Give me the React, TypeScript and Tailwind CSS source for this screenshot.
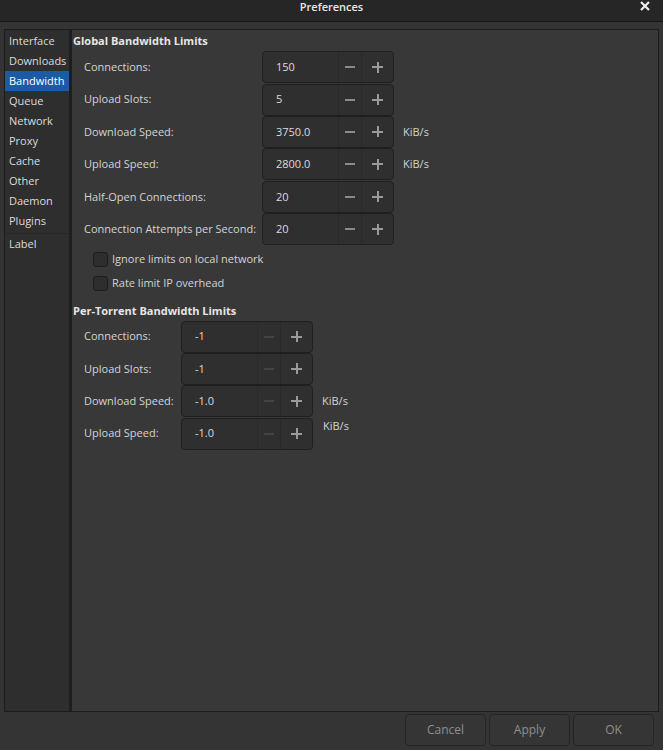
import React from 'react';

const font = { fontFamily: '"Open Sans", "Noto Sans", sans-serif' };

const sections = ['Interface', 'Downloads', 'Bandwidth', 'Queue', 'Network', 'Proxy', 'Cache', 'Other', 'Daemon', 'Plugins'];

type Row = { label: string; value: string; unit?: string; minusOff?: boolean };

const globalRows: Row[] = [
  { label: 'Connections:', value: '150' },
  { label: 'Upload Slots:', value: '5' },
  { label: 'Download Speed:', value: '3750.0', unit: 'KiB/s' },
  { label: 'Upload Speed:', value: '2800.0', unit: 'KiB/s' },
  { label: 'Half-Open Connections:', value: '20' },
  { label: 'Connection Attempts per Second:', value: '20' }
];

const torrentRows: Row[] = [
  { label: 'Connections:', value: '-1', minusOff: true },
  { label: 'Upload Slots:', value: '-1', minusOff: true },
  { label: 'Download Speed:', value: '-1.0', unit: 'KiB/s', minusOff: true },
  { label: 'Upload Speed:', value: '-1.0', minusOff: true }
];

function Spin({ value, minusOff }: { value: string; minusOff?: boolean }) {
  return (
    <div className="flex h-[32px] w-[132px] rounded-[4px] border border-[#1f1f1f] bg-[#2f2f2f]">
      <div className="flex w-[75px] items-center pl-[13px] text-[#dcdcdc]">{value}</div>
      <div className="flex w-[23px] items-center justify-center border-l border-[#292929]">
        <div className={`h-[2px] w-[10px] ${minusOff ? 'bg-[#444]' : 'bg-[#8a8a8a]'}`} />
      </div>
      <div className="relative flex flex-1 items-center justify-center border-l border-[#292929]">
        <div className="h-[2px] w-[11px] bg-[#9a9a9a]" />
        <div className="absolute h-[11px] w-[2px] bg-[#9a9a9a]" />
      </div>
    </div>
  );
}

function Rows({ rows, labelW }: { rows: Row[]; labelW: string }) {
  return (
    <div className="flex flex-col pl-[11px]">
      {rows.map((r) => (
        <div key={r.label} className="flex h-[32.4px] items-center">
          <div className={`${labelW} text-[#d4d4d4]`}>{r.label}</div>
          <Spin value={r.value} minusOff={r.minusOff} />
          {r.unit && <div className="ml-[9px] text-[#d4d4d4]">{r.unit}</div>}
        </div>
      ))}
    </div>
  );
}

function Check({ label }: { label: string }) {
  return (
    <div className="flex h-[24px] items-center pl-[20px]">
      <div className="mr-[4px] h-[15px] w-[15px] rounded-[3px] border border-[#1c1c1c] bg-[#2e2e2e]" />
      <span className="text-[#d4d4d4]">{label}</span>
    </div>
  );
}

export default function App() {
  return (
    <div className="flex h-[750px] w-[663px] flex-col bg-[#343434] text-[11px]" style={font}>
      <div className="relative flex h-[22px] items-start justify-center border-b border-[#151515] bg-[#262626]">
        <span className="font-semibold leading-[14px] text-[#e8e8e8]">Preferences</span>
        <svg className="absolute right-[13px] top-[1px]" width="10" height="10" viewBox="0 0 10 10">
          <path d="M1 1L9 9M9 1L1 9" stroke="#eeeeee" strokeWidth="2.2" />
        </svg>
      </div>
      <div className="mx-[4px] mt-[7px] flex h-[683px] border border-[#1c1c1c]">
        <div className="flex w-[64px] flex-col bg-[#2e2e2e] pt-[1px]">
          {sections.map((s) => (
            <div
              key={s}
              className={`flex h-[20px] items-center pl-[4px] text-[11px] ${s === 'Bandwidth' ? 'bg-[#1d5aa6] text-white' : 'text-[#dcdcdc]'}`}>
              {s}
            </div>
          ))}
          <div className="mt-[2px] h-px bg-[#262626]" />
          <div className="flex h-[20px] items-center pl-[4px] text-[11px] text-[#dcdcdc]">Label</div>
        </div>
        <div className="w-[3px] bg-[#1e1e1e]" />
        <div className="flex flex-1 flex-col bg-[#383838] pl-[1px] pt-[5px]">
          <div className="h-[16px] font-bold leading-[11px] text-[#e6e6e6]">Global Bandwidth Limits</div>
          <Rows rows={globalRows} labelW="w-[178px]" />
          <div className="mt-[2px]">
            <Check label="Ignore limits on local network" />
            <Check label="Rate limit IP overhead" />
          </div>
          <div className="mt-[10px] h-[15px] font-bold leading-[11px] text-[#e6e6e6]">Per-Torrent Bandwidth Limits</div>
          <div className="relative">
            <Rows rows={torrentRows} labelW="w-[97px]" />
            <div className="absolute left-[250px] top-[98px] text-[#d4d4d4]">KiB/s</div>
          </div>
        </div>
      </div>
      <div className="mt-[2px] flex justify-end gap-[3px] pr-[9px]">
        {['Cancel', 'Apply', 'OK'].map((b) => (
          <div
            key={b}
            className="flex h-[32px] w-[81px] items-center justify-center rounded-[4px] border border-[#242424] bg-[#353535] text-[12px] text-[#8f8f8f]">
            {b}
          </div>
        ))}
      </div>
    </div>
  );
}
